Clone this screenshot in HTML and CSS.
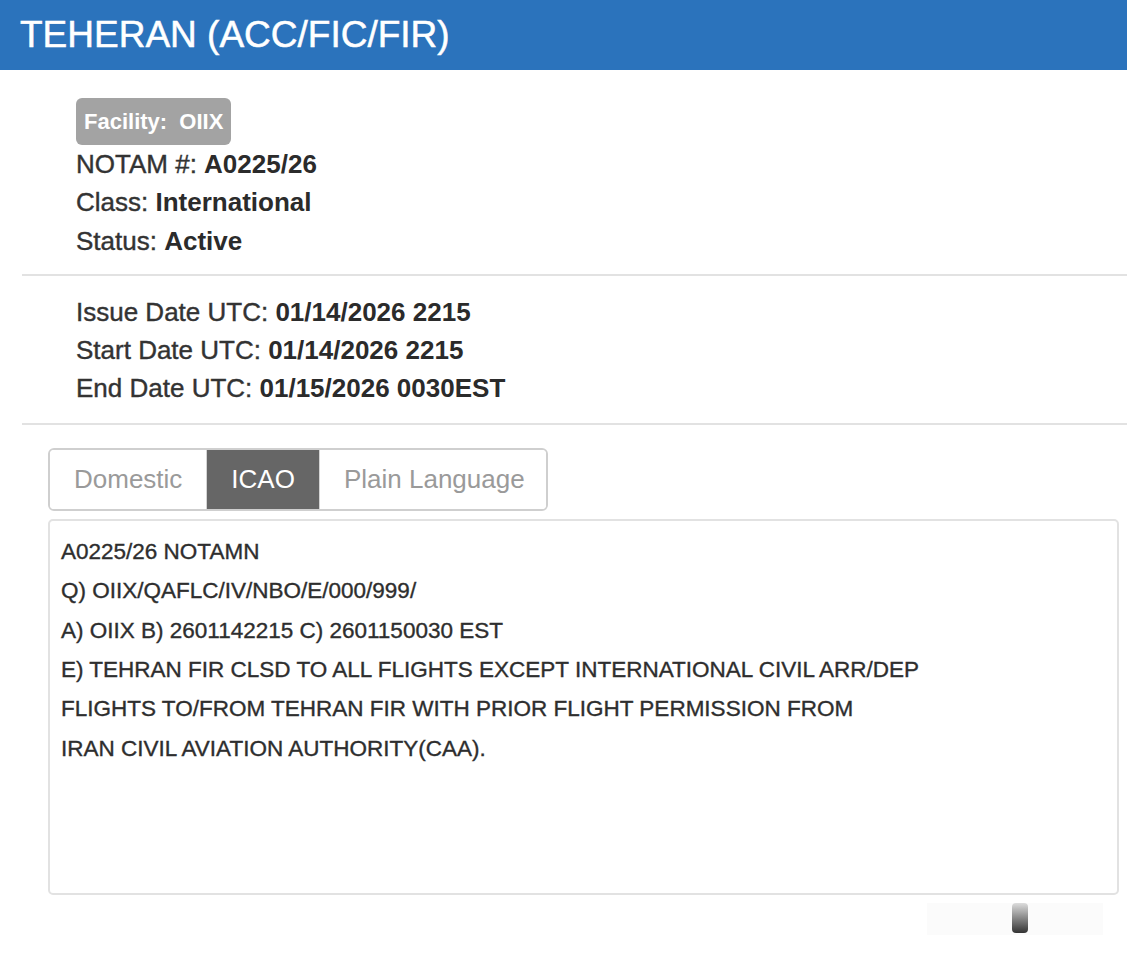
FILE: index.html
```html
<!DOCTYPE html>
<html lang="en">
<head>
  <meta charset="UTF-8">
  <meta name="viewport" content="width=device-width, initial-scale=1.0">
  <title>TEHERAN (ACC/FIC/FIR)</title>
  <link rel="stylesheet" href="styles.css">
</head>
<body>
  <header class="title-bar">
    <h1>TEHERAN (ACC/FIC/FIR)</h1>
  </header>

  <main class="notam">
    <section class="block block-top">
      <span class="badge">Facility:&nbsp; OIIX</span>
      <div class="line">NOTAM #: <b>A0225/26</b></div>
      <div class="line">Class: <b>International</b></div>
      <div class="line">Status: <b>Active</b></div>
    </section>

    <section class="block block-dates">
      <div class="line">Issue Date UTC: <b>01/14/2026 2215</b></div>
      <div class="line">Start Date UTC: <b>01/14/2026 2215</b></div>
      <div class="line">End Date UTC: <b>01/15/2026 0030EST</b></div>
    </section>

    <div class="tabs">
      <button class="tab">Domestic</button>
      <button class="tab active">ICAO</button>
      <button class="tab">Plain Language</button>
    </div>

    <div class="notam-text">
      <div>A0225/26 NOTAMN</div>
      <div>Q) OIIX/QAFLC/IV/NBO/E/000/999/</div>
      <div>A) OIIX B) 2601142215 C) 2601150030 EST</div>
      <div>E) TEHRAN FIR CLSD TO ALL FLIGHTS EXCEPT INTERNATIONAL CIVIL ARR/DEP</div>
      <div>FLIGHTS TO/FROM TEHRAN FIR WITH PRIOR FLIGHT PERMISSION FROM</div>
      <div>IRAN CIVIL AVIATION AUTHORITY(CAA).</div>
    </div>

    <div class="footer-bar">
      <div class="scroller"><span class="knob"></span></div>
    </div>
  </main>
</body>
</html>
```

FILE: styles.css
```css
body {
  margin: 0;
  font-family: 'Liberation Sans', Arial, Helvetica, sans-serif;
  background-color: #fff;
  color: #333;
}

.title-bar {
  background-color: #2b73bc;
  height: 70px;
  display: flex;
  align-items: center;
  padding-left: 20px;
}

.title-bar h1 {
  margin: 0;
  color: #fff;
  font-size: 37px;
  font-weight: normal;
  -webkit-text-stroke: 0.5px #fff;
}

.notam {
  padding-left: 22px;
}

.block {
  border-bottom: 2px solid #e2e2e2;
  padding-left: 54px;
}

.block-top {
  padding-top: 28px;
  padding-bottom: 14px;
}

.block-dates {
  padding-top: 17px;
  padding-bottom: 15px;
}

.badge {
  display: inline-block;
  background-color: #a3a3a3;
  color: #fff;
  font-weight: bold;
  font-size: 22px;
  line-height: 27px;
  padding: 10px 8px;
  border-radius: 6px;
}

.line {
  font-size: 26px;
  line-height: 38.3px;
  color: #333;
  -webkit-text-stroke: 0.4px #333;
}

.line b {
  color: #2b2b2b;
  -webkit-text-stroke: 0;
}

.tabs {
  display: inline-flex;
  margin: 23px 0 0 26px;
  border: 2px solid #cfcfcf;
  border-radius: 6px;
  overflow: hidden;
}

.tab {
  font-family: inherit;
  font-size: 26px;
  color: #9a9a9a;
  background-color: #fff;
  border: none;
  padding: 0 24px;
  height: 59px;
  cursor: pointer;
}

.tab:last-child {
  padding-right: 21px;
}

.tab + .tab {
  border-left: 1px solid #d4d4d4;
}

.tab.active {
  background-color: #666;
  color: #fff;
}

.notam-text {
  margin: 8px 8px 0 26px;
  height: 350px;
  border: 2px solid #e2e2e2;
  border-radius: 5px;
  padding: 11px 11px;
  font-size: 22.5px;
  line-height: 39.4px;
  color: #2e2e2e;
  -webkit-text-stroke: 0.35px #2e2e2e;
}

.footer-bar {
  display: flex;
  justify-content: flex-end;
  padding: 8px 24px 0 0;
}

.scroller {
  width: 166px;
  height: 32px;
  background-color: #fbfbfb;
  display: flex;
  justify-content: center;
  padding-left: 10px;
}

.knob {
  width: 16px;
  height: 30px;
  border-radius: 4px;
  background: linear-gradient(#ddd, #333);
}
```
